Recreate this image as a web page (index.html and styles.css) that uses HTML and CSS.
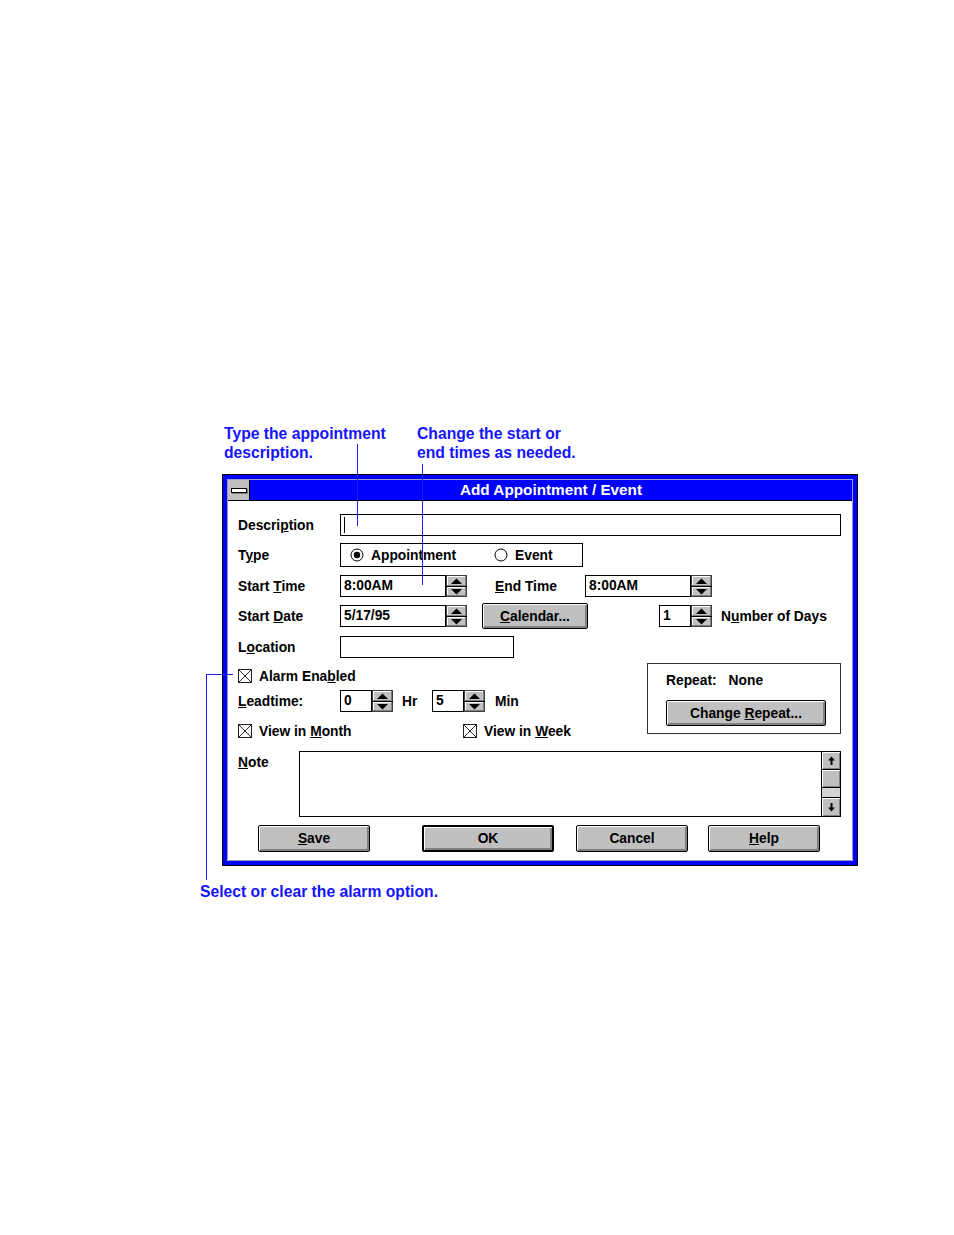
FILE: index.html
```html
<!DOCTYPE html>
<html lang="en">
<head>
    <meta charset="UTF-8">
    <title>Add Appointment / Event</title>
    <link rel="stylesheet" href="styles.css">
</head>
<body>
    <svg class="defs" width="0" height="0">
        <symbol id="spin" viewBox="0 0 21 22">
            <rect x="0.5" y="0.5" width="20" height="21" fill="#c0c0c0" stroke="#404040"/>
            <path d="M1 1.5H19M1.5 1V10" stroke="#fff"/>
            <path d="M1 10.5H20M19.5 1V10" stroke="#808080"/>
            <path d="M0 11.5H21" stroke="#000"/>
            <path d="M1 12.5H19M1.5 12V20" stroke="#fff"/>
            <path d="M1 20.5H20M19.5 12V21" stroke="#808080"/>
            <path d="M5 9H16L10.5 3.5Z" fill="#000"/>
            <path d="M5 14H16L10.5 19.5Z" fill="#000"/>
        </symbol>
        <symbol id="check" viewBox="0 0 14 14">
            <rect x="0.5" y="0.5" width="13" height="13" fill="#fff" stroke="#202020"/>
            <path d="M1 1L13 13M13 1L1 13" stroke="#303030"/>
        </symbol>
    </svg>

    <div class="figure">
        <div class="callouts">
            <div class="callout callout-desc">Type the appointment<br>description.</div>
            <div class="callout">Change the start or<br>end times as needed.</div>
        </div>

        <div class="window">
            <div class="window-inner">
                <div class="titlebar">
                    <div class="sysmenu"><span class="sysmenu-bar"></span></div>
                    <div class="title">Add Appointment / Event</div>
                </div>

                <div class="client">
                    <div class="row">
                        <div class="label">Descri<u>p</u>tion</div>
                        <div class="field field-desc"><span class="caret"></span></div>
                    </div>

                    <div class="row row-type">
                        <div class="label">T<u>y</u>pe</div>
                        <div class="type-group">
                            <div class="option option-first">
                                <svg width="14" height="14" viewBox="0 0 14 14"><circle cx="7" cy="7" r="6" fill="#fff" stroke="#000"/><circle cx="7" cy="7" r="3.2" fill="#000"/></svg>
                                <span class="text">Appointment</span>
                            </div>
                            <div class="option">
                                <svg width="14" height="14" viewBox="0 0 14 14"><circle cx="7" cy="7" r="6" fill="#fff" stroke="#000"/></svg>
                                <span class="text">Event</span>
                            </div>
                        </div>
                    </div>

                    <div class="row row-time">
                        <div class="label">Start <u>T</u>ime</div>
                        <div class="field field-time">8:00AM</div>
                        <svg class="spin" width="21" height="22"><use href="#spin"/></svg>
                        <div class="text label-end"><u>E</u>nd Time</div>
                        <div class="field field-time">8:00AM</div>
                        <svg class="spin" width="21" height="22"><use href="#spin"/></svg>
                    </div>

                    <div class="row row-date">
                        <div class="label">Start <u>D</u>ate</div>
                        <div class="field field-time">5/17/95</div>
                        <svg class="spin" width="21" height="22"><use href="#spin"/></svg>
                        <button class="btn btn-calendar"><u>C</u>alendar...</button>
                        <div class="field field-small field-days">1</div>
                        <svg class="spin" width="21" height="22"><use href="#spin"/></svg>
                        <div class="text label-days">N<u>u</u>mber of Days</div>
                    </div>

                    <div class="row row-loc">
                        <div class="label">L<u>o</u>cation</div>
                        <div class="field field-loc"></div>
                    </div>

                    <div class="section">
                        <div class="section-left">
                            <div class="check-row row-alarm">
                                <svg width="14" height="14"><use href="#check"/></svg>
                                <span class="text check-label">Alarm Ena<u>b</u>led</span>
                            </div>
                            <div class="row row-lead">
                                <div class="label"><u>L</u>eadtime:</div>
                                <div class="field field-small">0</div>
                                <svg class="spin" width="21" height="22"><use href="#spin"/></svg>
                                <span class="text unit unit-hr">Hr</span>
                                <div class="field field-small">5</div>
                                <svg class="spin" width="21" height="22"><use href="#spin"/></svg>
                                <span class="text unit">Min</span>
                            </div>
                            <div class="check-row row-view">
                                <div class="view-month">
                                    <svg width="14" height="14"><use href="#check"/></svg>
                                    <span class="text check-label">View in <u>M</u>onth</span>
                                </div>
                                <svg width="14" height="14"><use href="#check"/></svg>
                                <span class="text check-label">View in <u>W</u>eek</span>
                            </div>
                        </div>

                        <div class="repeat-box">
                            <div class="repeat-text">Repeat:<span class="repeat-value">None</span></div>
                            <button class="btn btn-repeat">Change <u>R</u>epeat...</button>
                        </div>
                    </div>

                    <div class="row-note">
                        <div class="note-label"><u>N</u>ote</div>
                        <div class="note-box">
                            <div class="note-text"></div>
                            <div class="vscroll">
                                <div class="sb-btn sb-up">
                                    <svg width="7" height="9" viewBox="0 0 7 9"><path d="M0 4.5L3.5 0.5L7 4.5H4.5V9H2.5V4.5Z" fill="#000"/></svg>
                                </div>
                                <div class="sb-thumb"></div>
                                <div class="sb-track"></div>
                                <div class="sb-btn sb-down">
                                    <svg width="7" height="9" viewBox="0 0 7 9"><path d="M0 4.5L3.5 8.5L7 4.5H4.5V0H2.5V4.5Z" fill="#000"/></svg>
                                </div>
                            </div>
                        </div>
                    </div>

                    <div class="buttons">
                        <button class="btn btn-save"><u>S</u>ave</button>
                        <button class="btn btn-ok">OK</button>
                        <button class="btn btn-cancel">Cancel</button>
                        <button class="btn btn-help"><u>H</u>elp</button>
                    </div>
                </div>
            </div>
        </div>

        <div class="callout callout-alarm">Select or clear the alarm option.</div>

        <!-- leader lines from the notes to the controls -->
        <div class="leader leader-desc"></div>
        <div class="leader leader-time"></div>
        <div class="leader leader-alarm-v"></div>
        <div class="leader leader-alarm-h"></div>
    </div>
</body>
</html>
```

FILE: styles.css
```css
* {
    box-sizing: border-box;
}

body {
    margin: 0;
    background: #fff;
    font-family: "Liberation Sans", Arial, sans-serif;
}

.defs {
    position: absolute;
}

.figure {
    position: relative;
    width: 660px;
    margin: 424px 0 0 200px;
}

/* blue notes */
.callouts {
    display: flex;
}

.callout {
    color: #1414ff;
    font-weight: bold;
    font-size: 15.7px;
    line-height: 19px;
}

.callout-desc {
    margin-left: 24px;
    width: 193px;
}

.callout-alarm {
    margin-top: 16px;
}

.leader {
    position: absolute;
    background: #1c1cff;
}

.leader-desc {
    left: 157px;
    top: 20px;
    width: 1px;
    height: 82px;
}

.leader-time {
    left: 222px;
    top: 40px;
    width: 1px;
    height: 121px;
}

.leader-alarm-v {
    left: 6px;
    top: 250px;
    width: 1px;
    height: 206px;
}

.leader-alarm-h {
    left: 6px;
    top: 250px;
    width: 27px;
    height: 1px;
}

/* window frame */
.window {
    width: 636px;
    margin: 12px 0 0 22px;
    border: 1px solid #000;
    padding: 4px;
    background: #0000ff;
}

.window-inner {
    border: 1px solid #9a9ac8;
}

.titlebar {
    display: flex;
    height: 21px;
    background: #0000ff;
    border-bottom: 1px solid #000;
}

.sysmenu {
    width: 22px;
    background: #c0c0c0;
    border-right: 1px solid #000;
    display: flex;
    align-items: center;
    justify-content: center;
}

.sysmenu-bar {
    width: 16px;
    height: 5px;
    background: #fff;
    border: 1px solid #000;
    box-shadow: 1px 1px 0 #808080;
}

.title {
    flex: 1;
    text-align: center;
    color: #fff;
    font-weight: bold;
    font-size: 15.3px;
    line-height: 20px;
}

/* dialog body */
.client {
    background: #fff;
    padding: 13px 11px 8px 10px;
    font-size: 13.8px;
    font-weight: bold;
    line-height: 16px;
    color: #000;
}

.row {
    display: flex;
    align-items: center;
    height: 22px;
}

/* nudges the text one pixel lower, as in the original bitmap font */
.label,
.text {
    padding-top: 2px;
}

.label {
    width: 102px;
    flex-shrink: 0;
}

.field {
    height: 22px;
    border: 1px solid #000;
    background: #fff;
    padding-left: 3px;
    display: flex;
    align-items: center;
}

.field-desc {
    flex: 1;
}

.caret {
    width: 1px;
    height: 16px;
    background: #000;
}

.field-time {
    width: 106px;
}

.field-small {
    width: 32px;
}

.field-loc {
    width: 174px;
}

.spin {
    display: block;
    flex-shrink: 0;
}

.row-type {
    height: 24px;
    margin-top: 7px;
}

.type-group {
    display: flex;
    align-items: center;
    width: 243px;
    height: 24px;
    border: 1px solid #000;
    padding-left: 9px;
}

.option {
    display: flex;
    align-items: center;
    gap: 7px;
}

.option-first {
    width: 144px;
}

.row-time {
    margin-top: 8px;
}

.label-end {
    margin-left: 28px;
    width: 90px;
}

.row-date {
    height: 26px;
    margin-top: 6px;
}

.btn {
    font-family: "Liberation Sans", Arial, sans-serif;
    font-size: 13.8px;
    font-weight: bold;
    color: #000;
    background: #c0c0c0;
    border: 1px solid #000;
    border-radius: 2px;
    box-shadow: inset 1px 1px 0 #fff, inset -2px -2px 0 #808080;
    padding: 0;
    height: 27px;
}

.btn-calendar {
    width: 106px;
    height: 26px;
    margin-left: 15px;
}

.field-days {
    margin-left: 71px;
}

.label-days {
    margin-left: 9px;
}

.row-loc {
    margin-top: 7px;
}

/* alarm and repeat */
.section {
    display: flex;
    align-items: flex-start;
    margin-top: 5px;
}

.section-left {
    flex: 1;
}

.check-row {
    display: flex;
    align-items: center;
}

.check-row svg {
    display: block;
}

.check-label {
    margin-left: 7px;
}

.row-alarm {
    height: 24px;
    padding-top: 1px;
}

.row-lead {
    margin-top: 3px;
}

.unit {
    margin-left: 10px;
}

.unit-hr {
    width: 30px;
    margin-left: 9px;
}

.row-view {
    height: 22px;
    margin-top: 7px;
    padding-top: 1px;
}

.view-month {
    display: flex;
    align-items: center;
    width: 225px;
}

.repeat-box {
    width: 194px;
    height: 71px;
    border: 1px solid #303030;
    padding: 9px 0 0 18px;
}

.repeat-value {
    margin-left: 12px;
}

.btn-repeat {
    display: block;
    width: 160px;
    height: 26px;
    margin-top: 11px;
}

/* note */
.row-note {
    display: flex;
    margin-top: 10px;
}

.note-label {
    width: 61px;
    padding-top: 4px;
}

.note-box {
    flex: 1;
    display: flex;
    height: 66px;
    border: 1px solid #000;
}

.note-text {
    flex: 1;
}

.vscroll {
    width: 19px;
    border-left: 1px solid #000;
    display: flex;
    flex-direction: column;
    background: #c0c0c0;
}

.sb-btn {
    display: flex;
    align-items: center;
    justify-content: center;
    background: #c0c0c0;
    box-shadow: inset 1px 1px 0 #fff, inset -1px -1px 0 #808080;
}

.sb-up {
    height: 18px;
    border-bottom: 1px solid #000;
}

.sb-thumb {
    height: 18px;
    border-bottom: 1px solid #000;
    box-shadow: inset 1px 1px 0 #fff, inset -1px -1px 0 #808080;
}

.sb-track {
    flex: 1;
    background: #d4d4d4;
    border-bottom: 1px solid #000;
}

.sb-down {
    height: 18px;
}

/* bottom buttons */
.buttons {
    display: flex;
    margin-top: 8px;
    padding-left: 20px;
}

.btn-save,
.btn-cancel,
.btn-help {
    width: 112px;
}

.btn-ok {
    width: 132px;
    margin-left: 52px;
    border-width: 2px;
}

.btn-cancel {
    margin-left: 22px;
}

.btn-help {
    margin-left: 20px;
}
```
